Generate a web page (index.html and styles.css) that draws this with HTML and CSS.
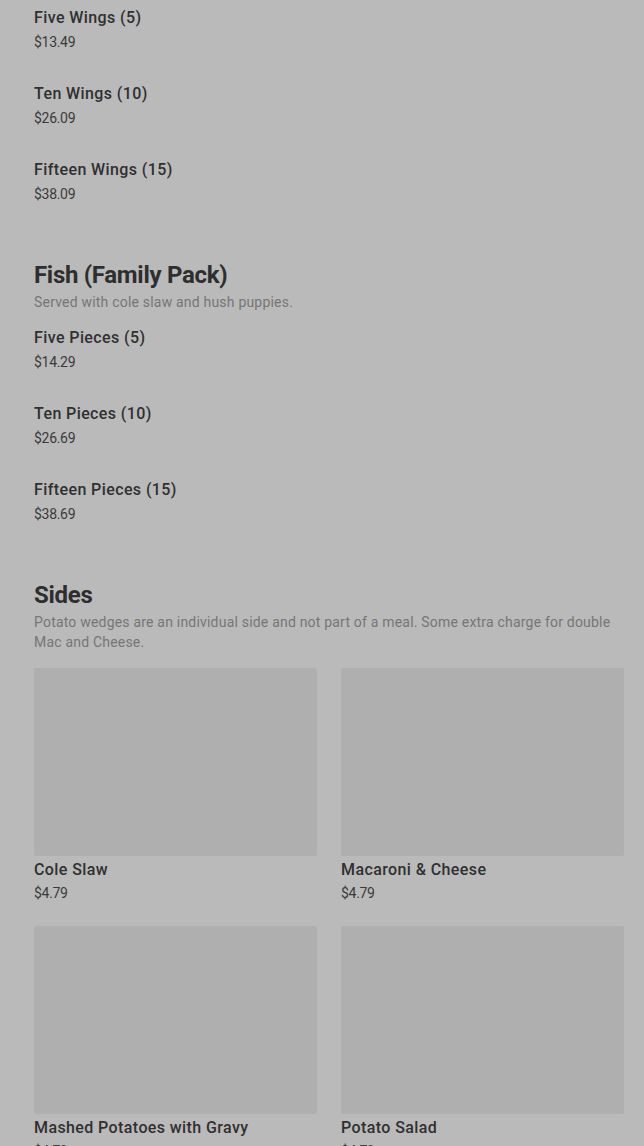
FILE: index.html
```html
<!DOCTYPE html>
<html>
<head>
<meta charset="utf-8">
<link rel="stylesheet" href="styles.css">
</head>
<body>
<main class="menu">
  <section class="section">
    <ul class="list">
      <li class="item"><div class="name">Five Wings (5)</div><div class="price">$13.49</div></li>
      <li class="item"><div class="name">Ten Wings (10)</div><div class="price">$26.09</div></li>
      <li class="item"><div class="name">Fifteen Wings (15)</div><div class="price">$38.09</div></li>
    </ul>
  </section>
  <section class="section">
    <h2 class="title">Fish (Family Pack)</h2>
    <p class="desc">Served with cole slaw and hush puppies.</p>
    <ul class="list">
      <li class="item"><div class="name">Five Pieces (5)</div><div class="price">$14.29</div></li>
      <li class="item"><div class="name">Ten Pieces (10)</div><div class="price">$26.69</div></li>
      <li class="item"><div class="name">Fifteen Pieces (15)</div><div class="price">$38.69</div></li>
    </ul>
  </section>
  <section class="section sides">
    <h2 class="title">Sides</h2>
    <p class="desc">Potato wedges are an individual side and not part of a meal. Some extra charge for double Mac and Cheese.</p>
    <div class="grid">
      <div class="card"><div class="thumb"></div><div class="name">Cole Slaw</div><div class="price">$4.79</div></div>
      <div class="card"><div class="thumb"></div><div class="name">Macaroni &amp; Cheese</div><div class="price">$4.79</div></div>
      <div class="card"><div class="thumb"></div><div class="name">Mashed Potatoes with Gravy</div><div class="price">$4.79</div></div>
      <div class="card"><div class="thumb"></div><div class="name">Potato Salad</div><div class="price">$4.79</div></div>
    </div>
  </section>
</main>
</body>
</html>
```
FILE: styles.css
```css
html, body {
  margin: 0;
  padding: 0;
  background: #bababa;
  overflow: hidden;
}
body {
  font-family: Roboto, "Liberation Sans", sans-serif;
  color: #333333;
}
.menu {
  padding: 6px 20px 0 34px;
}
.section {
  margin: 0;
}
.section + .section {
  margin-top: 25px;
}
.list {
  list-style: none;
  margin: 0;
  padding: 0;
}
.item {
  padding-bottom: 30px;
}
.name {
  font-size: 16px;
  line-height: 24px;
  font-weight: 500;
  color: #303030;
  letter-spacing: 0.4px;
}
.price {
  font-size: 14px;
  line-height: 20px;
  margin-top: 2px;
  color: #3a3a3a;
  letter-spacing: -0.3px;
}
.title {
  margin: 0;
  font-size: 24px;
  line-height: 32px;
  font-weight: 700;
  color: #2e2e2e;
  letter-spacing: -0.3px;
}
.desc {
  margin: 1px 0 14px;
  font-size: 14px;
  line-height: 20px;
  color: #767676;
  letter-spacing: 0.2px;
}
.sides .desc {
  margin-bottom: 16px;
}
.grid {
  display: grid;
  grid-template-columns: 1fr 1fr;
  column-gap: 24px;
  row-gap: 23px;
}
.card .thumb {
  height: 188px;
  background: #afafaf;
  border-radius: 2px;
}
.card .name {
  margin-top: 2px;
}
.card .price {
  margin-top: 1px;
}
```
